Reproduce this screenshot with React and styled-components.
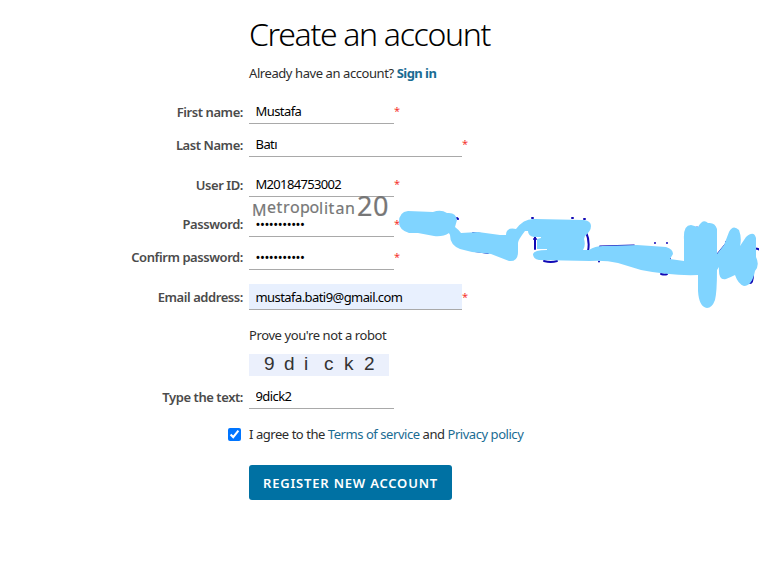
import React from 'react';
import styled, { createGlobalStyle } from 'styled-components';

const GlobalStyle = createGlobalStyle`
  * { box-sizing: border-box; }
  body { margin: 0; background: #fff; overflow: hidden; }
`;

const Page = styled.main`
  position: relative;
  width: 759px;
  height: 562px;
  padding-top: 13px;
  overflow: hidden;
  background: #fff;
  color: #2c2c2c;
  font: 13px/18px 'Noto Sans', 'Open Sans', sans-serif;
  letter-spacing: -0.4px;
`;

const Header = styled.header`
  height: 85px;
  padding-left: 249px;
`;

const Title = styled.h1`
  margin: 0;
  height: 42px;
  font: 300 32px/42px 'Noto Sans', 'Open Sans', sans-serif;
  letter-spacing: -1.33px;
  color: #000;
  white-space: nowrap;
`;

const Intro = styled.p`
  margin: 9px 0 0;
  letter-spacing: -0.42px;
  white-space: nowrap;
`;

const Link = styled.a`
  color: #1a6c93;
  font-weight: ${(p) => (p.$strong ? 700 : 400)};
  letter-spacing: ${(p) => (p.$strong ? '-0.53px' : 'inherit')};
  text-decoration: none;
`;

const Row = styled.div`
  display: grid;
  grid-template-columns: 243px auto 1fr;
  column-gap: 6px;
  height: 26px;
  margin-bottom: ${(p) => p.$gap || 0}px;
`;

const Label = styled.label`
  padding-top: ${(p) => (p.$raised ? 4 : 5)}px;
  text-align: right;
  font-weight: 600;
  color: #4b4b4b;
  letter-spacing: -0.43px;
  white-space: nowrap;
`;

const Input = styled.input`
  width: ${(p) => (p.$wide ? 213 : 145)}px;
  height: 26px;
  padding: 1px 6px 0 6.500px;
  border: 0;
  border-bottom: 1px solid #a9a9a9;
  border-radius: 0;
  outline: 0;
  background: ${(p) => (p.$filled ? '#e8f0fe' : 'transparent')};
  color: #000;
  font: 13px/18px 'Noto Sans', 'Open Sans', sans-serif;
  letter-spacing: ${(p) => p.$tracking ?? -0.57}px;

  &[type='password'] { letter-spacing: -0.43px; }
`;

const Required = styled.span`
  margin-left: -6px;
  padding-top: 4px;
  color: #f5362f;
  font-size: 11px;
  line-height: 18px;
`;

const Captcha = styled.section`
  height: 73px;
  padding: 16px 0 0 249px;
`;

const CaptchaImage = styled.div`
  display: flex;
  align-items: center;
  width: 140px;
  height: 22px;
  margin-top: 10px;
  padding: 0 0 2px 15px;
  background: #ebf0fc;
  color: #333;
  font: 19px/20px 'Liberation Sans', sans-serif;
  letter-spacing: 0;
`;

const CaptchaGlyph = styled.span`
  width: 20px;
`;

const Agreement = styled.div`
  display: flex;
  align-items: center;
  gap: 8px;
  height: 18px;
  margin-top: 16px;
  padding-left: 228px;
  letter-spacing: -0.45px;
  white-space: nowrap;
`;

const Checkbox = styled.input`
  width: 13px;
  height: 13px;
  margin: 0;
`;

const Submit = styled.button`
  display: block;
  width: 203px;
  height: 35px;
  margin: 22px 0 0 249px;
  padding: 0;
  border: 0;
  border-radius: 3px;
  background: #0071a3;
  color: #fff;
  font: 600 13px/18px 'Noto Sans', 'Open Sans', sans-serif;
  letter-spacing: 0.8px;
  white-space: nowrap;
`;

const Ink = styled.svg`
  position: absolute;
  inset: 0;
  pointer-events: none;
`;

const HandNote = styled.text`
  fill: #777;
  stroke: #777;
  stroke-width: 0.2px;
  font-family: 'Noto Sans', sans-serif;
  font-size: ${(p) => p.$size}px;
  letter-spacing: 0;
`;

const fields = [
  { id: 'first', label: 'First name:', value: 'Mustafa', gap: 7 },
  { id: 'last', label: 'Last Name:', value: 'Batı', wide: true, gap: 14 },
  { id: 'user', label: 'User ID:', value: 'M20184753002', gap: 14, tracking: -0.68 },
  { id: 'pass', label: 'Password:', value: 'secret12345', type: 'password', gap: 7, raised: true },
  { id: 'confirm', label: 'Confirm password:', value: 'secret12345', type: 'password', gap: 14, raised: true },
  { id: 'email', label: 'Email address:', value: 'mustafa.bati9@gmail.com', wide: true, filled: true, raised: true },
];

function Field({ id, label, value, type = 'text', wide, filled, gap, tracking, raised, optional }) {
  return (
    <Row $gap={gap}>
      <Label htmlFor={id} $raised={raised}>{label}</Label>
      <Input id={id} type={type} defaultValue={value} $wide={wide} $filled={filled} $tracking={tracking} />
      {!optional && <Required>*</Required>}
    </Row>
  );
}

function Scribble() {
  return (
    <Ink width="759" height="562" viewBox="0 0 759 562">
      <g fill="none" stroke="#1209b5" strokeWidth="2" strokeLinecap="round">
        <path d="M457 218l1 1M449 231l4 4M473 233l8 1M475 251q8 1 13 2M532 218l1 0M572 218l1 0M584 219l1 0M534 239l2 0M535 237v12M544 261q7 2 13 0M586 232q4 9 2 19M600 246.500l34-1M599 261.500v0M655 243v0M667 243v0M661 274q4 1 6 0M670 259v0M697 227.500v0M717 255l9-11v-2M755 248.500q3 0 4 1M753 274q0 9-3 9l-2-1" />
      </g>
      <path
        fill="#80d4ff"
        d="M408 211L433 212Q441 209 447 213Q456 212 457 220L455 227Q459 230 461 233L478 232L500 235L506 235Q506 227 516 229Q524 218 535 219L584 220Q591 221 591 226Q591 231 585 236L584 239Q586 245 583 250L589 250Q595 246 603 246L637 245L666 247Q673 249 673 254L670 259L684 261L684 240Q683 225 691 225L698 227Q703 218 708 223Q715 222 717 229L717 254L724 245L729 232Q733 224 739 230Q742 238 740 246L746 237Q754 230 756 238L756 257Q760 265 755 271Q752 286 744 286Q738 284 735 275Q731 277 726 279Q718 281 719 267L717 270Q717 292 715 300Q712 308 707 308Q699 307 698 291L698 275Q671 276 641 270L618 263Q605 260 590 261L539 260Q533 259 533 254Q534 250 547 250L547 249L537 249L537 239L541 238L541 237L534 237Q528 236 528 231L525 231Q518 240 518 243L518 252Q518 262 509 261L491 254L472 252L460 249Q450 245 450 235L449 233Q443 237 434 236L418 233L409 233Q399 230 399 222Q399 212 408 211Z"
      />
      <HandNote x="252 267 276.500 283 290 300 309.500 319 324 328.500 335.500 345" y="216 213 213 213 213 213 213 214 214 214 214 214" $size="16">Metropolitan</HandNote>
      <HandNote x="357 373" y="216" $size="27">20</HandNote>
    </Ink>
  );
}

export default function App() {
  return (
    <>
      <GlobalStyle />
      <Page>
        <Header>
          <Title>Create an account</Title>
          <Intro>Already have an account? <Link $strong>Sign in</Link></Intro>
        </Header>
        {fields.map((f) => <Field key={f.id} {...f} />)}
        <Captcha>
          Prove you're not a robot
          <CaptchaImage>
            {[...'9dick2'].map((c, i) => <CaptchaGlyph key={i}>{c}</CaptchaGlyph>)}
          </CaptchaImage>
        </Captcha>
        <Field id="captcha" label="Type the text:" value="9dick2" optional />
        <Agreement>
          <Checkbox type="checkbox" defaultChecked />
          <span>I agree to the <Link>Terms of service</Link> and <Link>Privacy policy</Link></span>
        </Agreement>
        <Submit>REGISTER NEW ACCOUNT</Submit>
        <Scribble />
      </Page>
    </>
  );
}
